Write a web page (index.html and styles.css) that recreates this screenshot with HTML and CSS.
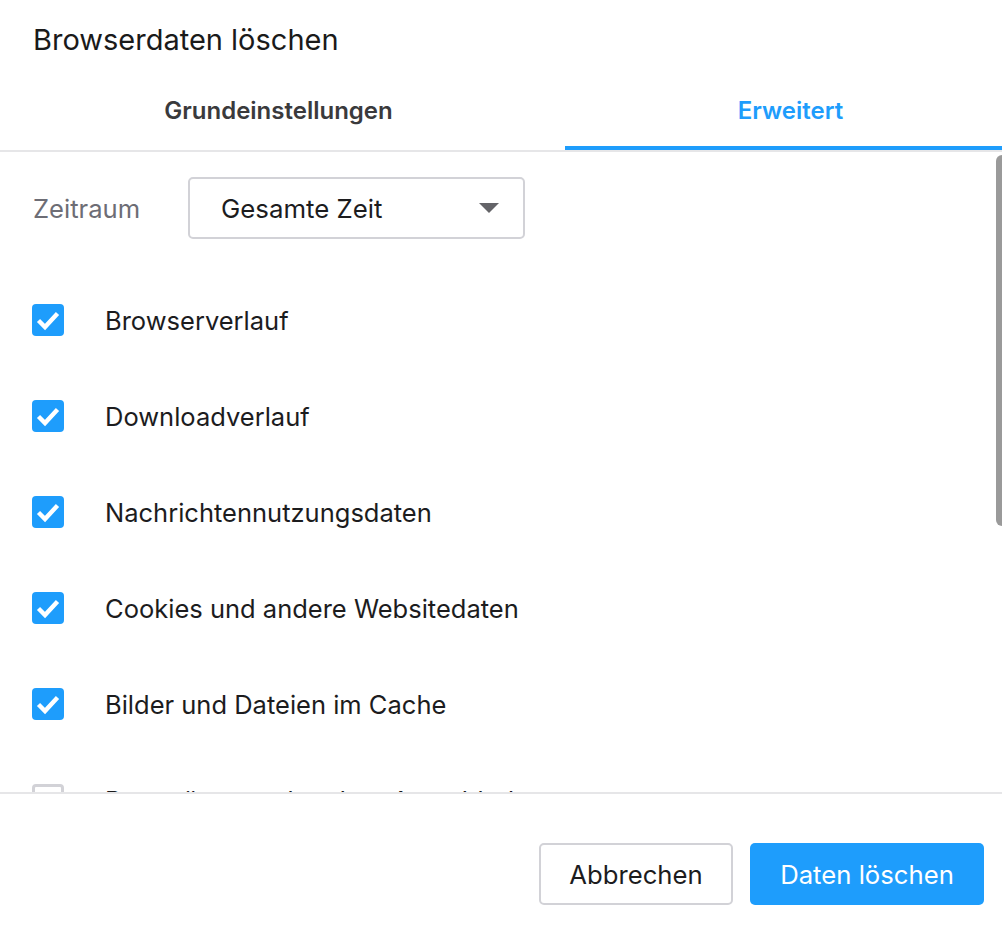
FILE: index.html
```html
<!DOCTYPE html>
<html lang="de">
<head>
<meta charset="utf-8">
<title>Browserdaten löschen</title>
<link rel="stylesheet" href="styles.css">
</head>
<body>
<div class="dialog">
  <h1 class="title">Browserdaten löschen</h1>
  <div class="tabs">
    <div class="tab tab-basic"><span>Grundeinstellungen</span></div>
    <div class="tab tab-adv active"><span>Erweitert</span></div>
  </div>
  <div class="content">
    <div class="range-row">
      <span class="range-label">Zeitraum</span>
      <div class="select">
        <span class="select-value">Gesamte Zeit</span>
        <span class="select-arrow"></span>
      </div>
    </div>
    <ul class="options">
      <li class="option"><span class="cb checked"><svg viewBox="0 0 32 32" width="32" height="32"><path d="M6.5 16.5 L13 23 L25.5 9.5" fill="none" stroke="#fff" stroke-width="4.4"/></svg></span><span class="opt-label">Browserverlauf</span></li>
      <li class="option"><span class="cb checked"><svg viewBox="0 0 32 32" width="32" height="32"><path d="M6.5 16.5 L13 23 L25.5 9.5" fill="none" stroke="#fff" stroke-width="4.4"/></svg></span><span class="opt-label">Downloadverlauf</span></li>
      <li class="option"><span class="cb checked"><svg viewBox="0 0 32 32" width="32" height="32"><path d="M6.5 16.5 L13 23 L25.5 9.5" fill="none" stroke="#fff" stroke-width="4.4"/></svg></span><span class="opt-label">Nachrichtennutzungsdaten</span></li>
      <li class="option"><span class="cb checked"><svg viewBox="0 0 32 32" width="32" height="32"><path d="M6.5 16.5 L13 23 L25.5 9.5" fill="none" stroke="#fff" stroke-width="4.4"/></svg></span><span class="opt-label">Cookies und andere Websitedaten</span></li>
      <li class="option"><span class="cb checked"><svg viewBox="0 0 32 32" width="32" height="32"><path d="M6.5 16.5 L13 23 L25.5 9.5" fill="none" stroke="#fff" stroke-width="4.4"/></svg></span><span class="opt-label">Bilder und Dateien im Cache</span></li>
      <li class="option"><span class="cb"></span><span class="opt-label">Passwörter und andere Anmeldedaten</span></li>
    </ul>
    <div class="scroll-thumb"></div>
  </div>
  <div class="footer">
    <button class="btn btn-cancel">Abbrechen</button>
    <button class="btn btn-primary">Daten löschen</button>
  </div>
</div>
</body>
</html>
```
FILE: styles.css
```css
* { box-sizing: border-box; }
html, body { margin: 0; padding: 0; background: #fff; }
body {
  font-family: Inter, "Noto Sans", "Liberation Sans", sans-serif;
  color: #1c1c1e;
  width: 1002px;
  height: 926px;
  overflow: hidden;
}
.dialog { display: flex; flex-direction: column; height: 926px; }
.title {
  margin: 0;
  height: 80px;
  line-height: 80px;
  padding-left: 33px;
  font-size: 29px;
  font-weight: 400;
  color: #1a1a1a;
}
.tabs {
  display: flex;
  height: 72px;
  border-bottom: 2px solid #e6e6e8;
}
.tab {
  position: relative;
  height: 70px;
  padding-top: 16px;
  line-height: 30px;
  font-size: 24px;
  font-weight: 600;
  color: #3a3a3c;
  text-align: center;
}
.tab-basic { width: 565px; padding-right: 8px; }
.tab-adv { flex: 1; padding-left: 14px; }
.tab.active { color: #1e9dfc; }
.tab.active::after {
  content: "";
  position: absolute;
  left: 0; right: 0; bottom: 0;
  height: 4px;
  background: #1e9dfc;
}
.content {
  position: relative;
  height: 640px;
  overflow: hidden;
  padding: 25px 0 0 33px;
}
.range-row { display: flex; align-items: center; height: 62px; }
.range-label { width: 155px; font-size: 25.6px; color: #6d6d75; }
.select {
  width: 337px;
  height: 62px;
  border: 2px solid #d2d2d7;
  border-radius: 5px;
  display: flex;
  align-items: center;
  justify-content: space-between;
  padding: 0 24px 0 31px;
}
.select-value { font-size: 25.8px; color: #1c1c1e; }
.select-arrow {
  width: 0; height: 0;
  border-left: 10px solid transparent;
  border-right: 10px solid transparent;
  border-top: 10px solid #646468;
}
.options { list-style: none; margin: 33px 0 0 -1px; padding: 0; }
.option { display: flex; align-items: center; height: 96px; }
.cb {
  width: 32px; height: 32px;
  border-radius: 4px;
  border: 3px solid #d2d2d7;
  flex: none;
  display: flex;
}
.cb.checked { background: #1e9dfc; border: none; }
.opt-label { margin-left: 41px; font-size: 25.5px; color: #1c1c1e; }
.scroll-thumb {
  position: absolute;
  right: 0; top: 3px;
  width: 6px; height: 371px;
  background: #9a9a9a;
  border-radius: 6px 0 0 6px;
}
.footer {
  flex: 1;
  border-top: 2px solid #e6e6e8;
  display: flex;
  justify-content: flex-end;
  align-items: flex-start;
  gap: 17px;
  padding: 49px 18px 0 0;
}
.btn {
  height: 62px;
  font-family: inherit;
  font-size: 25.7px;
  border-radius: 5px;
  padding: 0;
  cursor: pointer;
}
.btn-cancel { background: #fff; border: 2px solid #d2d2d7; color: #1c1c1e; width: 194px; }
.btn-primary { background: #1e9dfc; border: none; color: #fff; width: 234px; }
```
